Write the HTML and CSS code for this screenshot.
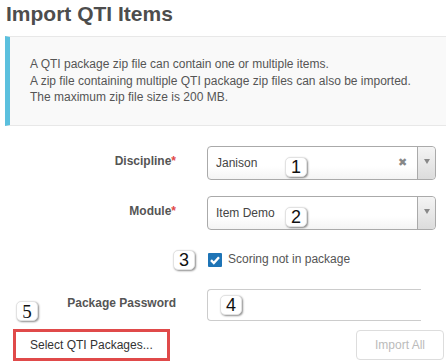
FILE: index.html
```html
<!DOCTYPE html>
<html lang="en">
<head>
  <meta charset="UTF-8">
  <meta name="viewport" content="width=device-width, initial-scale=1.0">
  <title>Import QTI Items</title>
  <link rel="stylesheet" href="styles.css">
</head>
<body>
  <h1>Import QTI Items</h1>

  <div class="info-box">
    <p>A QTI package zip file can contain one or multiple items.</p>
    <p>A zip file containing multiple QTI package zip files can also be imported.</p>
    <p>The maximum zip file size is 200 MB.</p>
  </div>

  <div class="import-form">
    <div class="form-row row-discipline">
      <label class="form-label">Discipline<span class="required">*</span></label>
      <div class="select-box">
        <span class="select-value">Janison</span>
        <span class="select-clear">&#x2716;</span>
        <span class="select-arrow"><b></b></span>
        <span class="badge badge-select">1</span>
      </div>
    </div>

    <div class="form-row row-module">
      <label class="form-label">Module<span class="required">*</span></label>
      <div class="select-box">
        <span class="select-value">Item Demo</span>
        <span class="select-arrow"><b></b></span>
        <span class="badge badge-select">2</span>
      </div>
    </div>

    <div class="form-row row-check">
      <div class="form-label"></div>
      <label class="check-label">
        <span class="checkbox">
          <svg width="14" height="14" viewBox="0 0 14 14"><path d="M3 7.2 L5.8 10 L11 4.2" fill="none" stroke="#fff" stroke-width="2.4"/></svg>
        </span>
        Scoring not in package
      </label>
      <span class="badge badge-check">3</span>
    </div>

    <div class="form-row row-password">
      <label class="form-label">Package Password</label>
      <div class="text-input">
        <span class="badge badge-input">4</span>
      </div>
      <span class="badge badge-five">5</span>
    </div>

    <div class="button-row">
      <div class="highlight">
        <button class="btn">Select QTI Packages...</button>
      </div>
      <button class="btn btn-disabled">Import All</button>
    </div>
  </div>
</body>
</html>
```

FILE: styles.css
```css
* {
  margin: 0;
  padding: 0;
  box-sizing: border-box;
}

body {
  font-family: "Liberation Sans", Arial, sans-serif;
  font-size: 12px;
  color: #555;
  background-color: #fff;
  width: 446px;
  overflow: hidden;
}

h1 {
  padding: 2px 6px 0;
  font-size: 21px;
  line-height: 24px;
  font-weight: bold;
  color: #4d4d4d;
}

.info-box {
  margin: 10px 0 0 5px;
  padding: 19px 20px 19px 20px;
  background-color: #f9f9f9;
  border-top: 1px solid #e8e8e8;
  border-bottom: 1px solid #e8e8e8;
  border-left: 5px solid #5bc0de;
  font-size: 12px;
  line-height: 16.5px;
  color: #555;
}

.import-form {
  position: relative;
}

.form-row {
  position: relative;
  display: flex;
  align-items: center;
}

.form-label {
  width: 176px;
  flex-shrink: 0;
  margin-right: 31px;
  text-align: right;
  font-weight: bold;
  color: #555;
  padding-bottom: 3px;
}

.required {
  color: #e04848;
}

.row-discipline {
  margin-top: 20px;
}

.row-module {
  margin-top: 16px;
}

.row-check {
  margin-top: 20px;
  height: 20px;
}

.row-password {
  margin-top: 19px;
}

.select-box {
  position: relative;
  display: flex;
  align-items: center;
  width: 229px;
  height: 34px;
  border: 1px solid #aaa;
  border-radius: 4px;
  background: linear-gradient(#fff 0%, #fff 60%, #f4f4f4 100%);
  padding-left: 8px;
  color: #444;
  font-size: 12px;
}

.select-value {
  flex: 1;
}

.select-clear {
  width: 20px;
  font-size: 11px;
  color: #888;
  text-align: center;
  margin-right: 5px;
}

.select-arrow {
  align-self: stretch;
  width: 18px;
  border-left: 1px solid #aaa;
  border-radius: 0 4px 4px 0;
  background: linear-gradient(#f4f4f4, #dcdcdc);
  display: flex;
  justify-content: center;
  padding-top: 12px;
}

.select-arrow b {
  width: 0;
  height: 0;
  border-left: 3.5px solid transparent;
  border-right: 3.5px solid transparent;
  border-top: 5px solid #888;
}

.badge {
  position: absolute;
  width: 22px;
  height: 20px;
  background-color: #fff;
  border: 1px solid #e2e2e2;
  border-radius: 5px;
  box-shadow: 1px 1px 2px rgba(0, 0, 0, 0.45);
  font-size: 18px;
  line-height: 19px;
  font-weight: normal;
  color: #111;
  text-align: center;
}

.badge-select {
  left: 77px;
  top: 10px;
}

.badge-check {
  left: 173px;
  top: 0;
}

.badge-input {
  left: 12px;
  top: 5px;
}

.badge-five {
  left: 16px;
  top: 12px;
  font-family: "Liberation Serif", "Times New Roman", serif;
  font-size: 19px;
}

.check-label {
  display: flex;
  align-items: center;
  color: #555;
  font-size: 12px;
  padding-bottom: 1px;
}

.checkbox {
  display: inline-flex;
  width: 14px;
  height: 14px;
  margin: 1px 6px 0 1px;
  background-color: #1e74b6;
  border-radius: 1px;
}

.text-input {
  position: relative;
  width: 214px;
  height: 32px;
  border: 1px solid #ccc;
  border-right: none;
  border-radius: 4px 0 0 4px;
  background-color: #fff;
}

.button-row {
  display: flex;
  justify-content: space-between;
  align-items: center;
  margin-top: 8px;
  padding: 0 2px 0 13px;
}

.highlight {
  border: 3px solid #e04a4a;
}

.btn {
  display: block;
  height: 26px;
  padding: 0 14px;
  font-family: "Liberation Sans", Arial, sans-serif;
  font-size: 12px;
  color: #333;
  background-color: #fff;
  border: none;
  cursor: pointer;
}

.btn-disabled {
  width: 88px;
  height: 30px;
  padding: 0;
  color: #bbb;
  border: 1px solid #ddd;
  border-radius: 4px;
  cursor: default;
}
```
